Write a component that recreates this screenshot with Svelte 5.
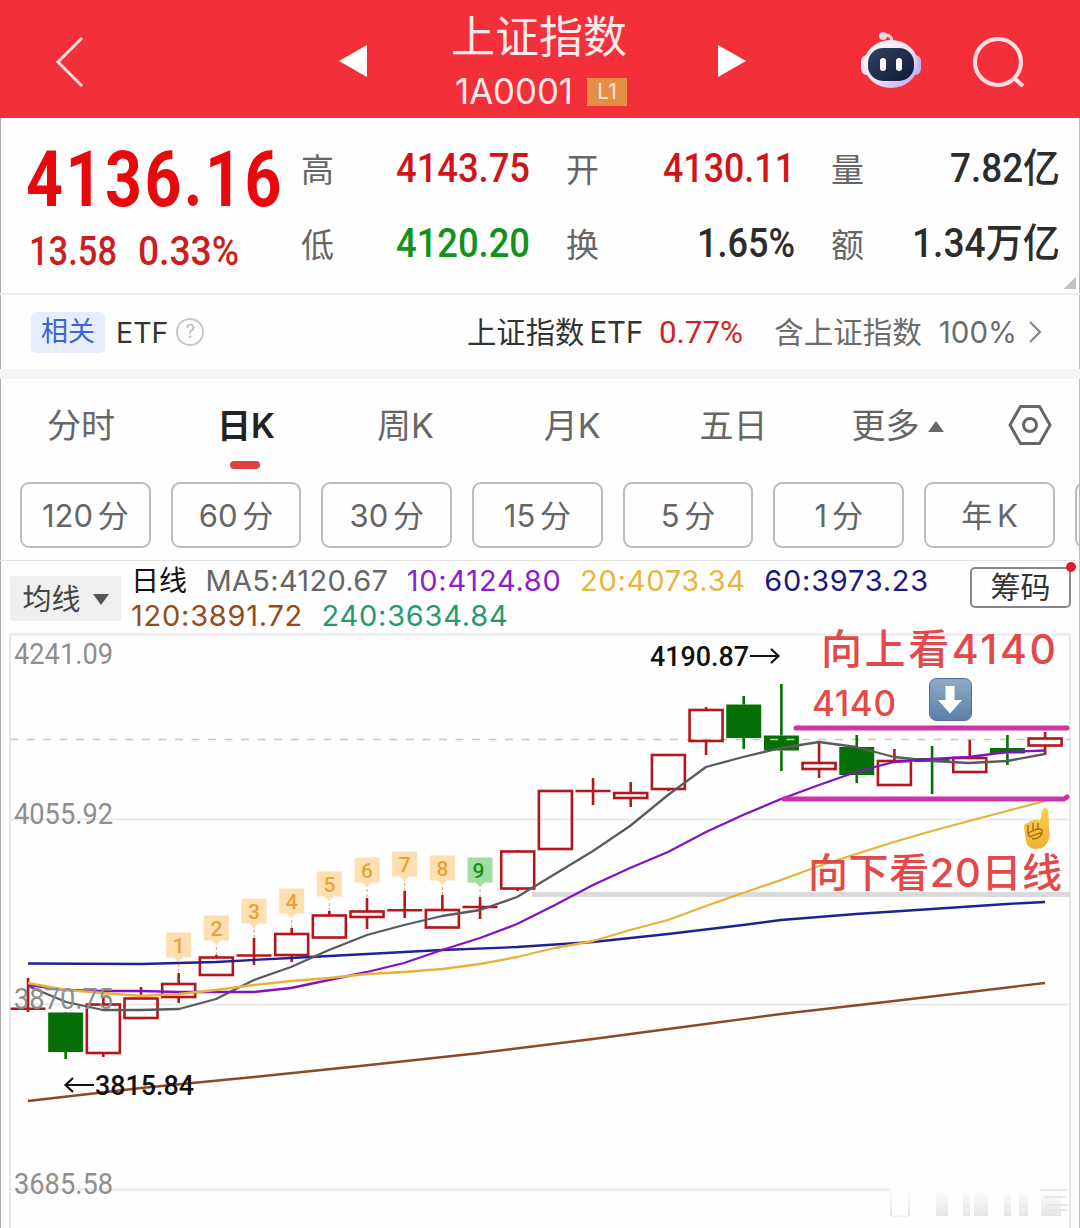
<script lang="ts">
	type Candle = { top: number; bottom: number; high: number; low: number; down?: boolean };

	const stats = [
		{ label: '高', value: '4143.75', width: 134, tone: 'up' },
		{ label: '开', value: '4130.11', width: 132, tone: 'up' },
		{ label: '量', value: '7.82亿', width: 110, tone: 'flat' },
		{ label: '低', value: '4120.20', width: 134, tone: 'down' },
		{ label: '换', value: '1.65%', width: 98, tone: 'flat' },
		{ label: '额', value: '1.34万亿', width: 148, tone: 'flat' }
	];

	const periods = ['120 分', '60 分', '30 分', '15 分', '5 分', '1 分', '年 K'];

	// body top, body bottom, high, low in chart units
	const candles: Candle[] = [
		{ top: 1008.7, bottom: 1008.7, high: 978, low: 1012 },
		{ top: 1012.5, bottom: 1052, high: 1012, low: 1059, down: true },
		{ top: 1004.5, bottom: 1053, high: 997, low: 1057 },
		{ top: 998.5, bottom: 1018, high: 987, low: 1018 },
		{ top: 984, bottom: 997, high: 973, low: 1003 },
		{ top: 957.5, bottom: 975, high: 955, low: 975 },
		{ top: 955.5, bottom: 955.5, high: 938, low: 965 },
		{ top: 934, bottom: 955, high: 928, low: 962 },
		{ top: 915.5, bottom: 937.5, high: 911, low: 937 },
		{ top: 911.5, bottom: 917, high: 898, low: 929 },
		{ top: 910.3, bottom: 910.3, high: 891, low: 918 },
		{ top: 910, bottom: 927.5, high: 895, low: 927 },
		{ top: 907, bottom: 907, high: 897, low: 919 },
		{ top: 851.5, bottom: 888.5, high: 850, low: 891 },
		{ top: 791, bottom: 849, high: 791, low: 849 },
		{ top: 791, bottom: 791, high: 778, low: 805 },
		{ top: 793, bottom: 798, high: 782, low: 807 },
		{ top: 755, bottom: 789, high: 755, low: 791 },
		{ top: 710, bottom: 741, high: 707, low: 755 },
		{ top: 704.5, bottom: 738, high: 696, low: 749, down: true },
		{ top: 735.5, bottom: 750.5, high: 684, low: 771, down: true },
		{ top: 763, bottom: 769, high: 743, low: 778 },
		{ top: 747, bottom: 775, high: 735, low: 783, down: true },
		{ top: 761, bottom: 785, high: 749, low: 785 },
		{ top: 758, bottom: 762, high: 746, low: 794, down: true },
		{ top: 758, bottom: 772, high: 740, low: 772 },
		{ top: 748, bottom: 753.5, high: 735, low: 765, down: true },
		{ top: 738.5, bottom: 745.5, high: 732, low: 755 }
	];

	const markers = [945, 928, 911, 901, 884, 870, 864, 868, 870];

	const averages = [
		{
			name: 'ma120',
			points:
				'28,1101 141,1088 254,1077 360,1066 480,1053 593,1039 668,1029 781,1014 894,1001 1045,983'
		},
		{
			name: 'ma60',
			points:
				'28,963.5 141,964 216,962 291,958 367,954 442,950 517,947 593,942 668,934 743,925 781,920 856,914 932,909 1007,904 1045,902'
		},
		{
			name: 'ma5',
			points:
				'28,986 66,1002 103,1010 141,1010 179,1009 216,999 254,980 291,967 329,950 367,935 404,925 442,916 480,910 517,897 555,874 593,851 630,826 668,795 706,767 743,757 781,748 819,742 856,747 894,757 932,761 969,763 1007,761 1045,754'
		},
		{
			name: 'ma10',
			points:
				'28,985 66,990 103,991 141,991 179,992 254,992 291,988 329,980 367,972 404,963 442,950 480,938 517,924 555,905 593,885 630,868 668,852 706,832 743,815 781,799 819,785 856,772 894,762 932,759 969,757 1007,752 1045,750.5'
		},
		{
			name: 'ma20',
			points:
				'28,983 66,990 103,993 141,996 179,994 216,990 254,985 291,981 329,978 367,974 404,972 442,969 480,964 517,957 555,948 593,941 630,930 668,920 706,906 743,893 781,880 819,866 856,854 894,842 932,831 969,821 1007,811 1045,801'
		}
	];

	const scale = [
		{ y: 663.5, label: '4241.09' },
		{ y: 823.5, label: '4055.92' },
		{ y: 1008.5, label: '3870.75' },
		{ y: 1193.5, label: '3685.58' }
	];

	const x = (i: number) => 28 + i * 37.67;
</script>

{#snippet fit(text: string, width: number, size: number)}
	<svg class="fit" {width} height={size} overflow="visible">
		<text x="0" y={size * 0.86} font-size={size} textLength={width} lengthAdjust="spacingAndGlyphs"
			>{text}</text
		>
	</svg>
{/snippet}

<main>
	<header>
		<svg class="back" width="30" height="54" viewBox="0 0 30 54">
			<path d="M27 3 3 27l24 24" />
		</svg>
		<svg class="tri" width="28" height="32" viewBox="0 0 28 32"><path d="M28 0v32L0 16z" /></svg>
		<div class="title">
			<h1>上证指数</h1>
			<div class="code">{@render fit('1A0001', 118, 35)}<span>L1</span></div>
		</div>
		<svg class="tri" width="28" height="32" viewBox="0 0 28 32"><path d="M0 0v32l28-16z" /></svg>
		<svg class="bot" width="62" height="58" viewBox="0 0 62 58">
			<defs>
				<linearGradient id="shell" x1="0" y1="0" x2="1" y2="1">
					<stop offset="0" stop-color="#fff" />
					<stop offset=".5" stop-color="#f6e4f2" />
					<stop offset="1" stop-color="#b5a2ec" />
				</linearGradient>
				<linearGradient id="face" x1="0" y1="0" x2="1" y2="1">
					<stop offset="0" stop-color="#33405f" />
					<stop offset="1" stop-color="#101a3c" />
				</linearGradient>
			</defs>
			<path d="M23 5q9-3 9 7" fill="none" stroke="#fbd5dc" stroke-width="3" />
			<circle cx="23" cy="5" r="4" fill="#fbd5dc" />
			<rect x="1" y="24" width="12" height="20" rx="6" fill="#f3e3f6" />
			<rect x="49" y="24" width="12" height="20" rx="6" fill="#c5b2f2" />
			<ellipse cx="31" cy="33" rx="27" ry="24" fill="url(#shell)" />
			<rect x="8" y="17" width="46" height="33" rx="15" fill="url(#face)" />
			<rect x="20" y="27" width="6" height="13" rx="3" fill="#fff" />
			<rect x="36" y="27" width="6" height="13" rx="3" fill="#fff" />
		</svg>
		<svg class="search" width="54" height="54" viewBox="0 0 54 54">
			<circle cx="26" cy="26" r="23" />
			<path d="m42 42 9 8" />
		</svg>
	</header>

	<section class="quote">
		<div class="price">
			<div class="last">{@render fit('4136.16', 258, 77)}</div>
			<div class="change">
				{@render fit('13.58', 88, 40)}
				{@render fit('0.33%', 101, 40)}
			</div>
		</div>
		<dl>
			{#each stats as s}
				<div class="stat">
					<dt>{s.label}</dt>
					<dd class={s.tone}>{@render fit(s.value, s.width, 40)}</dd>
				</div>
			{/each}
		</dl>
		<i class="corner"></i>
	</section>

	<section class="related">
		<span class="tag">相关</span>
		<span class="etf">ETF</span>
		<span class="help">?</span>
		<span class="fund">上证指数 ETF</span>
		<span class="rate">{@render fit('0.77%', 84, 32)}</span>
		<span class="weight">含上证指数</span>
		<span class="weight pct">100%</span>
		<svg class="more" width="14" height="24" viewBox="0 0 14 24"><path d="m2 2 10 10L2 22" /></svg>
	</section>

	<nav class="tabs">
		<button>分时</button>
		<button class="active">日K</button>
		<button>周K</button>
		<button>月K</button>
		<button>五日</button>
		<button>更多<i></i></button>
		<svg width="44" height="42" viewBox="0 0 44 42">
			<path d="M12.5 2.500h19L42 21 31.500 39.500h-19L2 21z" />
			<circle cx="22" cy="21" r="6.500" />
		</svg>
	</nav>

	<div class="periods">
		{#each periods as p}
			<button>{p}</button>
		{/each}
		<button aria-label="更多周期"></button>
	</div>

	<section class="legend">
		<button class="kind">均线<i></i></button>
		<div class="values">
			<div class="row">
				<b>日线</b>
				<span class="t5">MA5:4120.67</span>
				<span class="t10">10:4124.80</span>
				<span class="t20">20:4073.34</span>
				<span class="t60">60:3973.23</span>
			</div>
			<div class="row">
				<span class="t120">120:3891.72</span>
				<span class="t240">240:3634.84</span>
			</div>
		</div>
		<button class="chips">筹码<i></i></button>
	</section>

	<svg class="chart" width="1080" height="602" viewBox="0 626 1080 602">
		<defs>
			<linearGradient id="key" x1="0" y1="0" x2="0" y2="1">
				<stop offset="0" stop-color="#8fabc6" />
				<stop offset="1" stop-color="#5980a6" />
			</linearGradient>
			<linearGradient id="hand" x1="0" y1="0" x2="0" y2="1">
				<stop offset="0" stop-color="#fbd055" />
				<stop offset="1" stop-color="#efb02c" />
			</linearGradient>
			<linearGradient id="smudge" x1="0" y1="0" x2="0" y2="1">
				<stop offset="0" stop-color="#e6e6e6" stop-opacity="0" />
				<stop offset="1" stop-color="#e6e6e6" />
			</linearGradient>
		</defs>

		<path class="grid" d="M10 1228V634.500H1070V1228M10 819.500H1070M10 1004.500H1070M10 1189.500H890" />
		<path class="dash" d="M10 739.500H1070" />
		<path class="gap" d="M532 894.500H1070" />

		{#each candles as c, i}
			<g class={c.down ? 'fall' : 'rise'}>
				<path d="M{x(i)} {c.high}V{c.top}M{x(i)} {c.bottom}V{c.low}" />
				{#if c.top === c.bottom}
					<path d="M{x(i) - 17.500} {c.top}h35" />
				{:else if c.down}
					<rect x={x(i) - 17.500} y={c.top} width="35" height={c.bottom - c.top} />
				{:else}
					<rect x={x(i) - 16.500} y={c.top} width="33" height={c.bottom - c.top} />
				{/if}
			</g>
		{/each}
		<path class="dash over" d="M770 739.500H798" />

		{#each averages as a}
			<polyline class={a.name} points={a.points} />
		{/each}

		{#each markers as y, i}
			<g class="marker" class:last={i === 8}>
				<path class="lead" d="M{x(i + 4)} {y + 14}V{candles[i + 4].high}" />
				<path class="flag" d="M{x(i + 4) - 12.500} {y - 12.500}h25v25h-8l-4.500 4.500-4.500-4.500h-8z" />
				<text x={x(i + 4)} y={y + 7.500}>{i + 1}</text>
			</g>
		{/each}

		{#each scale as s}
			<text class="axis" x="14" y={s.y} textLength="99" lengthAdjust="spacingAndGlyphs">{s.label}</text>
		{/each}

		<text class="peak" x="650" y="666" textLength="99" lengthAdjust="spacingAndGlyphs">4190.87</text>
		<path class="arrow" d="M750 656h28m-7-7 7.500 7-7.500 7" />
		<text class="peak" x="95" y="1095" textLength="99" lengthAdjust="spacingAndGlyphs">3815.84</text>
		<path class="arrow" d="M94 1085H66m7-7-7.500 7 7.500 7" />

		<path class="range" d="M796 728H1067M784 799H1064l3-2" />
		<text class="note" x="821" y="664" font-size="41" textLength="235">向上看4140</text>
		<text class="note" x="812" y="716" font-size="35" textLength="84">4140</text>
		<text class="note" x="808" y="887" font-size="40" textLength="254">向下看20日线</text>

		<rect x="929.500" y="678.500" width="42" height="42" rx="7" fill="url(#key)" stroke="#4d7093" />
		<path d="M945.500 686h9v14h7.500l-12 13.500-12-13.500h7.500z" fill="#fff" />

		<g class="finger">
			<path
				d="M1042 811q1-3 3.500-3t3 4l.5 18q1.500 4 0 9-3 10-13 10-8 0-10-8l-2-13q-.5-5 4-5 1-3 5-2.500 3-2 7 .5z"
			/>
			<path class="crease" d="M1028 825v8m5-10v7m5-7v6m-10 4q1 5 4 3l8-3q3 0 2-3-3-2-7 0l-7 3m4 6q8 0 10-6" />
		</g>

		<g fill="url(#smudge)">
			<rect x="890" y="1188" width="2" height="28" />
			<rect x="908" y="1188" width="2" height="28" />
			<rect x="892" y="1215" width="16" height="1.500" />
			<rect x="936" y="1190" width="12" height="26" />
			<rect x="963" y="1190" width="7" height="26" />
			<rect x="974" y="1190" width="14" height="26" />
			<rect x="1004" y="1190" width="7" height="26" />
			<rect x="1019" y="1190" width="9" height="26" />
			<rect x="1041" y="1190" width="20" height="26" />
		</g>
		<path class="trail" d="M1040 1190h27m-22 7h21m-20 8h22m-18 5h17" />
	</svg>
</main>

<style>
	:global(body) {
		background: #fff;
		overflow: hidden;
	}
	main {
		box-sizing: border-box;
		width: 1080px;
		height: 1228px;
		overflow: hidden;
		background: #fefefe;
		box-shadow: inset 1px 0 #aaa, inset -1px 0 #bbb;
		font-family: Inter, 'Noto Sans CJK SC', sans-serif;
		color: #333;
	}
	button {
		padding: 0;
		border: 0;
		background: none;
		font: inherit;
		color: inherit;
	}
	.fit {
		display: block;
		flex: none;
		font-family: Roboto, 'Noto Sans CJK SC', sans-serif;
		fill: currentColor;
	}

	header {
		display: flex;
		align-items: center;
		height: 118px;
		background: #f32f39;
		color: #ffe9ea;
	}
	header svg {
		flex: none;
	}
	.back {
		margin: 6px 0 0 55px;
		fill: none;
		stroke: #ffd9db;
		stroke-width: 3;
	}
	.tri {
		margin-top: 4px;
		fill: #fff;
	}
	.back + .tri {
		margin-left: 254px;
	}
	.title {
		width: 176px;
		margin: 7px 91px 0 84px;
	}
	h1 {
		margin: 0;
		font-size: 44px;
		line-height: 50px;
		font-weight: 400;
		white-space: nowrap;
	}
	.code {
		display: flex;
		align-items: center;
		gap: 14px;
		margin: 8px 0 0 4px;
		height: 44px;
	}
	.code .fit {
		font-family: Inter, sans-serif;
	}
	.code span {
		width: 40px;
		height: 28px;
		background: #e58f43;
		font-size: 21px;
		line-height: 28px;
		text-align: center;
	}
	.bot {
		margin: 2px 0 0 114px;
	}
	.search {
		margin: 7px 0 0 50px;
		fill: none;
		stroke: #ffdfe1;
		stroke-width: 4;
	}

	.quote {
		position: relative;
		display: flex;
		box-sizing: border-box;
		height: 177px;
		border-bottom: 2px solid #ececec;
	}
	.price {
		width: 301px;
		box-sizing: border-box;
		padding: 22px 0 0 26px;
		color: #e60a0d;
	}
	.last {
		font-weight: 700;
		letter-spacing: 3px;
	}
	.change {
		display: flex;
		gap: 21px;
		margin: 14px 0 0 3px;
		color: #c91f22;
		font-weight: 500;
	}
	dl {
		display: grid;
		grid-template-columns: 229px 229px 229px;
		grid-template-rows: 75px 75px;
		column-gap: 36px;
		margin: 12px 0 0;
	}
	.stat {
		display: flex;
		align-items: center;
		justify-content: space-between;
	}
	dt {
		font-size: 33px;
		color: #666;
	}
	dd {
		margin: 0;
		font-weight: 500;
	}
	dd.up {
		color: #d01519;
	}
	dd.down {
		color: #109318;
	}
	dd.flat {
		color: #2c2c2c;
	}
	.corner {
		position: absolute;
		right: 4px;
		bottom: 4px;
		width: 13px;
		height: 13px;
		background: linear-gradient(135deg, transparent 50%, #c4c4c4 50%);
	}

	.related {
		display: flex;
		align-items: center;
		height: 74px;
		padding: 0 38px 0 31px;
		border-bottom: 10px solid #f4f4f4;
		font-size: 28.500px;
		white-space: nowrap;
	}
	.tag {
		width: 74px;
		height: 41px;
		border-radius: 5px;
		background: #e6edfc;
		color: #3b66cc;
		font-size: 27px;
		line-height: 39px;
		text-align: center;
	}
	.etf {
		margin-left: 11px;
	}
	.help {
		box-sizing: border-box;
		width: 28px;
		height: 28px;
		margin-left: 8px;
		border: 2px solid #c9c9c9;
		border-radius: 50%;
		color: #bbb;
		font-size: 19px;
		line-height: 24px;
		text-align: center;
	}
	.fund {
		margin-left: auto;
		padding-bottom: 4px;
		font-size: 29.300px;
		word-spacing: -3px;
	}
	.rate {
		margin: 0 31px 2px 16px;
		color: #cd2427;
	}
	.weight {
		padding-bottom: 4px;
		color: #6c6c6c;
		font-size: 29.500px;
	}
	.pct {
		margin: 0 11px 0 17px;
		padding-bottom: 0;
	}
	.more {
		fill: none;
		stroke: #888;
		stroke-width: 2.200;
	}

	.tabs {
		display: flex;
		align-items: center;
		box-sizing: border-box;
		height: 96px;
		padding: 0 0 8px 47px;
		color: #666;
		font-size: 34px;
		white-space: nowrap;
	}
	.tabs button {
		position: relative;
		margin-right: 102px;
	}
	.tabs .active {
		color: #222;
		font-weight: 600;
	}
	.tabs .active::after {
		content: '';
		position: absolute;
		left: 50%;
		bottom: -21px;
		width: 30px;
		height: 8px;
		margin-left: -16px;
		border-radius: 4px;
		background: #e0403f;
	}
	.tabs button:nth-child(3) {
		margin-right: 110px;
	}
	.tabs button:nth-child(4) {
		margin-right: 99px;
	}
	.tabs button:nth-child(5) {
		margin-right: 84px;
	}
	.tabs button:nth-child(6) {
		margin-right: 64px;
	}
	.tabs button i,
	.kind i {
		display: inline-block;
		margin-left: 8px;
		border: solid transparent;
		border-width: 0 8px 11px;
		border-bottom-color: #666;
		vertical-align: 6px;
	}
	.tabs svg {
		flex: none;
		margin-top: 3px;
		fill: none;
		stroke: #666;
		stroke-width: 3;
	}

	.periods {
		display: flex;
		gap: 20px;
		height: 66px;
		padding: 7px 0 12px 20px;
		border-bottom: 1px solid #e2e2e2;
		overflow: hidden;
	}
	.periods button {
		box-sizing: border-box;
		flex: none;
		width: 130.700px;
		padding-bottom: 4px;
		border: 2px solid #bcbcbc;
		border-radius: 9px;
		color: #666;
		font-size: 31px;
		word-spacing: -4px;
	}

	.legend {
		display: flex;
		height: 65px;
		padding-left: 10px;
	}
	.kind {
		width: 111px;
		height: 45px;
		margin-top: 15px;
		padding-bottom: 3px;
		border-radius: 3px;
		background: #efefef;
		color: #444;
		font-size: 29px;
	}
	.kind i {
		margin-left: 12px;
		border-width: 11px 8px 0;
		border-top-color: #555;
		vertical-align: 5px;
	}
	.values {
		flex: 1;
		padding: 2px 0 0 10px;
		font-size: 29px;
	}
	.row {
		display: flex;
		align-items: center;
		gap: 18.500px;
		height: 35px;
		letter-spacing: 0.750px;
		white-space: nowrap;
	}
	.row b {
		padding-bottom: 3px;
		color: #111;
		font-size: 28px;
		font-weight: 400;
		letter-spacing: 0;
	}
	.t5 {
		color: #666;
		letter-spacing: 0.300px;
	}
	.t10 {
		color: #8c1fcb;
	}
	.t20 {
		color: #e5b73b;
	}
	.t60 {
		color: #1c1884;
	}
	.t120 {
		color: #954b1b;
	}
	.t240 {
		color: #259a70;
	}
	.chips {
		position: relative;
		box-sizing: border-box;
		width: 101px;
		height: 41px;
		margin: 6px 9px 0 0;
		border: 2px solid #888;
		border-radius: 5px;
		color: #333;
		font-size: 30px;
		line-height: 35px;
	}
	.chips i {
		position: absolute;
		top: -7px;
		right: -7px;
		width: 10px;
		height: 10px;
		border-radius: 50%;
		background: #dd1f2b;
	}

	.chart {
		display: block;
		overflow: visible;
		fill: none;
	}
	.grid {
		stroke: #e9e9e9;
		stroke-width: 2;
	}
	.dash {
		stroke: #cfc8ae;
		stroke-width: 1.600;
		stroke-dasharray: 8 8.500;
	}
	.over {
		stroke: #b4d48f;
	}
	.gap {
		stroke: #dadada;
		stroke-width: 5;
	}
	.rise {
		stroke: #b3161c;
		stroke-width: 2.600;
	}
	.fall {
		fill: #067006;
		stroke: #067006;
		stroke-width: 2.600;
	}
	.fall rect {
		stroke: none;
	}
	polyline {
		stroke-width: 2.300;
		stroke-linejoin: round;
	}
	.ma5 {
		stroke: #5b5b5b;
	}
	.ma10 {
		stroke: #8412c4;
	}
	.ma20 {
		stroke: #e8b23a;
	}
	.ma60 {
		stroke: #1e2390;
	}
	.ma120 {
		stroke: #8b4a24;
	}
	.lead {
		stroke: #d9a066;
		stroke-dasharray: 3 2;
	}
	.flag {
		fill: #fddfb2;
	}
	.marker text {
		fill: #e9a238;
		font: 500 21px Roboto, sans-serif;
		text-anchor: middle;
	}
	.marker.last .flag {
		fill: #9fdda0;
	}
	.marker.last text {
		fill: #11921b;
	}
	.axis {
		fill: #8e8e8e;
		font: 400 29px Roboto, sans-serif;
	}
	.peak {
		fill: #111;
		font: 500 28px Roboto, sans-serif;
	}
	.arrow {
		stroke: #111;
		stroke-width: 2.200;
	}
	.range {
		stroke: #cb33a8;
		stroke-width: 5;
		stroke-linecap: round;
	}
	.note {
		fill: #e24a4a;
		font-weight: 500;
	}
	.finger {
		fill: url(#hand);
	}
	.crease {
		fill: none;
		stroke: #9c6a14;
		stroke-width: 1.300;
	}
	.trail {
		stroke: #e2e2e2;
		stroke-width: 1.500;
	}
</style>
